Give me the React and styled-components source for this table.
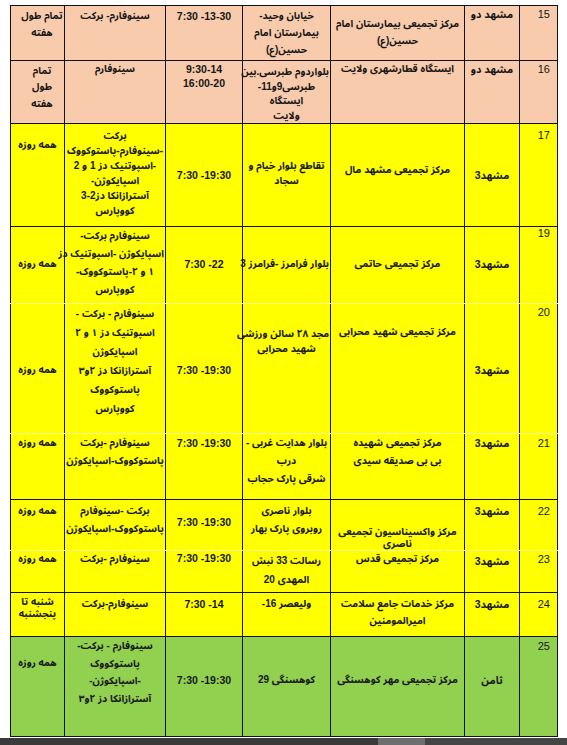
import React from 'react';
import styled, { createGlobalStyle } from 'styled-components';

const GlobalStyle = createGlobalStyle`
  html, body {
    margin: 0;
    padding: 0;
    background: #fff;
  }
  body {
    font-family: "Liberation Sans", "Noto Sans Arabic", "DejaVu Sans Condensed", "DejaVu Sans", sans-serif;
  }
`;

const tones = {
  peach: '#f8cbad',
  yellow: '#ffff00',
  green: '#92d050',
};

const Page = styled.div`
  width: 567px;
  height: 745px;
  display: flex;
  flex-direction: column;
  overflow: hidden;
`;

const Sheet = styled.div`
  padding: 5px 11px 0 10px;
`;

const Table = styled.table`
  width: 547px;
  direction: rtl;
  border-collapse: collapse;
  table-layout: fixed;
  border: 1.5px solid #000;
`;

const Col = styled.col`
  width: ${({ $w }) => $w}px;
`;

const Band = styled.tr`
  height: ${({ $h }) => $h}px;
  background: ${({ $tone }) => tones[$tone]};

  ${({ $open }) => $open && `& > td { border-bottom: 1px solid #fbfb8c; }`}
`;

const Cell = styled.td`
  border: 1px solid #111;
  padding: ${({ $pt = 2 }) => $pt}px 1px 0;
  vertical-align: top;
  text-align: center;
  color: #161616;
  font-size: 10px;
  font-weight: bold;
  font-stretch: condensed;
  line-height: ${({ $lh = 14 }) => $lh}px;
  white-space: nowrap;
`;

const NumCell = styled(Cell)`
  text-align: right;
  padding-right: 7px;
  font-size: 11px;
  font-weight: normal;
  font-stretch: normal;
`;

const CityCell = styled(Cell)`
  font-size: 10.5px;
`;

const TimeCell = styled(Cell)`
  direction: ltr;
  font-size: 10.5px;
  font-stretch: normal;
`;

const DaysCell = styled(Cell)`
  padding-left: ${({ $pl = 1 }) => $pl}px;
`;

const Taskbar = styled.div`
  margin-top: auto;
  height: 7px;
  display: flex;
`;

const Seg = styled.div`
  flex: ${({ $grow }) => ($grow ? 1 : 'none')};
  width: ${({ $w }) => ($w ? `${$w}px` : 'auto')};
  background: ${({ $c }) => $c};
`;

const Lines = ({ t }) =>
  t.map((line, i) => (
    <React.Fragment key={i}>
      {i > 0 && <br />}
      {line}
    </React.Fragment>
  ));

const rows = [
  {
    n: '15', tone: 'peach', h: 55,
    num: { pt: 1 },
    city: { t: ['مشهد دو'], pt: 1 },
    name: { t: ['مرکز  تجمیعی بیمارستان امام', 'حسین(ع)'], pt: 9, lh: 17 },
    addr: { t: ['خیابان وحید-', 'بیمارستان امام', 'حسین(ع)'], pt: 1, lh: 17 },
    time: { t: ['7:30 -13-30'], pt: 3 },
    vax: { t: ['سینوفارم- برکت'], pt: 3 },
    days: { t: ['تمام طول', 'هفته'], pt: 1, lh: 17, pl: 10 },
  },
  {
    n: '16', tone: 'peach', h: 63,
    num: { pt: 1 },
    city: { t: ['مشهد دو'], pt: 1 },
    name: { t: ['ایستگاه قطارشهری ولایت'], pt: 1 },
    addr: { t: ['بلواردوم طبرسی.بین', 'طبرسی9و11-', 'ایستگاه', 'ولایت'], pt: 4, lh: 14.5 },
    time: { t: ['9:30-14', '16:00-20'], pt: 1 },
    vax: { t: ['سینوفارم'], pt: 1 },
    days: { t: ['تمام', 'طول', 'هفته'], pt: 1.5, lh: 16.5, pl: 10 },
  },
  {
    n: '17', tone: 'yellow', h: 103,
    num: { pt: 4 },
    city: { t: ['مشهد3'], pt: 43, lh: 16 },
    name: { t: ['مرکز تجمیعی مشهد مال'], pt: 39 },
    addr: { t: ['تقاطع بلوار خیام و', 'سجاد'], pt: 34, lh: 15 },
    time: { t: ['7:30 -19:30'], pt: 44 },
    vax: {
      t: ['برکت', '-سینوفارم-پاستوکووک', '-اسپوتنیک دز 1 و 2', 'اسپایکوژن-', 'آسترازانکا دز2-3', 'کووپارس'],
      pt: 4, lh: 15,
    },
    days: { t: ['همه روزه'], pt: 14 },
  },
  {
    n: '19', tone: 'yellow', h: 77, open: true,
    num: { pt: 0, lh: 12 },
    city: { t: ['مشهد3'], pt: 29, lh: 16 },
    name: { t: ['مرکز تجمیعی حاتمی'], pt: 30 },
    addr: { t: ['بلوار فرامرز -فرامرز 3'], pt: 30 },
    time: { t: ['7:30 -22'], pt: 30 },
    vax: { t: ['سینوفارم برکت-', 'اسپایکوژن -اسپوتنیک دز', '۱ و ۲-پاستوکووک-', 'کووپارس'], pt: 0, lh: 18 },
    days: { t: ['همه روزه'], pt: 30 },
  },
  {
    n: '20', tone: 'yellow', h: 130, open: true,
    num: { pt: 1 },
    city: { t: ['مشهد3'], pt: 58, lh: 16 },
    name: { t: ['مرکز تجمیعی شهید محرابی'], pt: 21 },
    addr: { t: ['مجد ۲۸ سالن ورزشی', 'شهید محرابی'], pt: 22, lh: 15 },
    time: { t: ['7:30 -19:30'], pt: 59 },
    vax: {
      t: ['سینوفارم - برکت -', 'اسپوتنیک دز ۱ و ۲', 'اسپایکوژن', 'آسترازانکا دز ۲و۳', 'پاستوکووک', 'کووپارس'],
      pt: 0, lh: 19,
    },
    days: { t: ['همه روزه'], pt: 59 },
  },
  {
    n: '21', tone: 'yellow', h: 66,
    num: { pt: 1.5 },
    city: { t: ['مشهد3'], pt: 0.5, lh: 16 },
    name: { t: ['مرکز تجمیعی شهیده', 'بی بی صدیقه سیدی'], pt: 0, lh: 18 },
    addr: { t: ['بلوار هدایت غربی -', 'درب', 'شرقی پارک حجاب'], pt: 0, lh: 18 },
    time: { t: ['7:30 -19:30'], pt: 1.5 },
    vax: { t: ['سینوفارم -برکت', 'پاستوکووک-اسپایکوژن'], pt: 0, lh: 18 },
    days: { t: ['همه روزه'], pt: 1.5 },
  },
  {
    n: '22', tone: 'yellow', h: 51, open: true,
    num: { pt: 3.5 },
    city: { t: ['مشهد3'], pt: 2.5, lh: 16 },
    name: { t: ['مرکز واکسیناسیون تجمیعی', 'ناصری'], pt: 26, lh: 12 },
    addr: { t: ['بلوار ناصری', 'روبروی پارک بهار'], pt: 1.5, lh: 18 },
    time: { t: ['7:30 -19:30'], pt: 15 },
    vax: { t: ['برکت -سینوفارم', 'پاستوکووک-اسپایکوژن'], pt: 1.5, lh: 18 },
    days: { t: ['همه روزه'], pt: 3.5 },
  },
  {
    n: '23', tone: 'yellow', h: 42,
    num: { pt: 0.5 },
    city: { t: ['مشهد3'], pt: 1.5, lh: 16 },
    name: { t: ['مرکز تجمیعی قدس'], pt: 0.5 },
    addr: { t: ['رسالت 33 نبش', 'المهدی 20'], pt: 0, lh: 19 },
    time: { t: ['7:30 -19:30'], pt: 0.5, lh: 12 },
    vax: { t: ['سینوفارم -برکت'], pt: 0.5 },
    days: { t: ['همه روزه'], pt: 0.5 },
  },
  {
    n: '24', tone: 'yellow', h: 44,
    num: { pt: 3.5 },
    city: { t: ['مشهد3'], pt: 2.5, lh: 16 },
    name: { t: ['مرکز  خدمات جامع سلامت', 'امیرالمومنین'], pt: 2, lh: 17 },
    addr: { t: ['ولیعصر 16-'], pt: 3.5 },
    time: { t: ['7:30 -14'], pt: 3.5 },
    vax: { t: ['سینوفارم-برکت'], pt: 3.5 },
    days: { t: ['شنبه تا', 'پنجشنبه'], pt: 2.5, lh: 12 },
  },
  {
    n: '25', tone: 'green', h: 100,
    num: { pt: 1.5 },
    city: { t: ['ثامن'], pt: 35, lh: 16 },
    name: { t: ['مرکز تجمیعی مهر کوهسنگی'], pt: 36 },
    addr: { t: ['کوهسنگی 29'], pt: 36 },
    time: { t: ['7:30 -19:30'], pt: 36 },
    vax: { t: ['سینوفارم - برکت-', 'پاستوکووک', '-اسپایکوژن-', 'آسترازانکا دز ۲و۳'], pt: 0, lh: 17.5 },
    days: { t: ['همه روزه'], pt: 19 },
  },
];

// right-to-left: number, city, centre, address, hours, vaccines, days
const widths = [38, 55, 134, 88, 77, 101, 54];

const App = () => (
  <Page>
    <GlobalStyle />
    <Sheet>
      <Table>
        <colgroup>
          {widths.map((w, i) => (
            <Col key={i} $w={w} />
          ))}
        </colgroup>
        <tbody>
          {rows.map((r) => (
            <Band key={r.n} $h={r.h} $tone={r.tone} $open={r.open}>
              <NumCell $pt={r.num.pt} $lh={r.num.lh}>{r.n}</NumCell>
              <CityCell $pt={r.city.pt} $lh={r.city.lh}><Lines t={r.city.t} /></CityCell>
              <Cell $pt={r.name.pt} $lh={r.name.lh}><Lines t={r.name.t} /></Cell>
              <Cell $pt={r.addr.pt} $lh={r.addr.lh}><Lines t={r.addr.t} /></Cell>
              <TimeCell $pt={r.time.pt} $lh={r.time.lh}><Lines t={r.time.t} /></TimeCell>
              <Cell $pt={r.vax.pt} $lh={r.vax.lh}><Lines t={r.vax.t} /></Cell>
              <DaysCell $pt={r.days.pt} $lh={r.days.lh} $pl={r.days.pl}><Lines t={r.days.t} /></DaysCell>
            </Band>
          ))}
        </tbody>
      </Table>
    </Sheet>
    <Taskbar>
      <Seg $w={378} $c="#3a3a3a" />
      <Seg $w={47} $c="#6e6e6e" />
      <Seg $grow $c="#454545" />
    </Taskbar>
  </Page>
);

export default App;
